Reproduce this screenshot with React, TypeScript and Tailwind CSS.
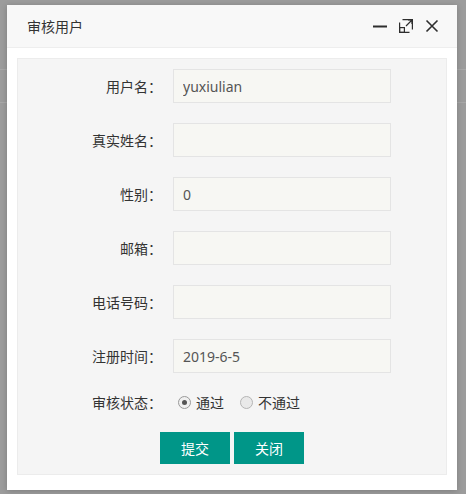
import React, { useState } from 'react';

const font = { fontFamily: '"Noto Sans", "Noto Sans CJK SC", sans-serif' };

const fields = [
  { label: '用户名：', value: 'yuxiulian' },
  { label: '真实姓名：', value: '' },
  { label: '性别：', value: '0' },
  { label: '邮箱：', value: '' },
  { label: '电话号码：', value: '' },
  { label: '注册时间：', value: '2019-6-5' },
];

const Radio = ({ checked, label, onClick }) => (
  <label onClick={onClick} className="flex items-center gap-[5px] cursor-pointer">
    <span className={`w-[13px] h-[13px] rounded-full border flex items-center justify-center ${checked ? 'border-[#9a9a9a] bg-[#f0f0f0]' : 'border-[#b5b5b5] bg-[#e9e9e9]'}`}>
      {checked && <span className="w-[5px] h-[5px] rounded-full bg-[#555]" />}
    </span>
    <span className="text-[14px] text-[#333]">{label}</span>
  </label>
);

export default function App() {
  const [pass, setPass] = useState(true);

  return (
    <div className="relative w-[466px] h-[494px] bg-[#9c9c9c] overflow-hidden" style={font}>
      {/* page behind the shade */}
      <div className="flex flex-col">
        <div className="h-[70px] border-b border-[#a8a8a8]" />
        <div className="h-[33px] border-b border-[#a8a8a8]" />
      </div>

      <div className="absolute left-[7px] top-[5px] w-[450px] h-[485px] bg-white flex flex-col shadow-[0_1px_6px_rgba(0,0,0,0.2)]">
        <div className="h-[43px] bg-[#f8f8f8] border-b border-[#eee] flex items-center pl-[20px] pr-[18px] shrink-0">
          <span className="text-[14px] text-[#333] flex-1">审核用户</span>
          <div className="flex items-center gap-[12px] text-[#2e2e2e]">
            <svg width="14" height="14" viewBox="0 0 14 14"><path d="M0 7.5h14" stroke="currentColor" strokeWidth="2" /></svg>
            <svg width="14" height="14" viewBox="0 0 14 14" fill="none" stroke="currentColor" strokeWidth="1.2">
              <path d="M3.5 0.6H13.4V10.5M0.6 3.5V13.4H10.5" />
              <rect x="0.6" y="8.6" width="4.8" height="4.8" />
              <path d="M7 7L13 1M9 1h4v4" />
            </svg>
            <svg width="14" height="14" viewBox="0 0 14 14"><path d="M1.5 1.5l11 11M12.5 1.5l-11 11" stroke="currentColor" strokeWidth="1.6" /></svg>
          </div>
        </div>

        <div className="flex-1 px-[10px] pt-[10px] pb-[15px] flex">
          <div className="flex-1 bg-[#f5f5f5] border border-[#ececec] pt-[10px] flex flex-col">
            {fields.map((f) => (
              <div key={f.label} className="flex items-center mb-[20px]">
                <div className="w-[144px] text-right text-[14px] text-[#333]">{f.label}</div>
                <input
                  readOnly
                  value={f.value}
                  className="ml-[11px] w-[218px] h-[34px] bg-[#f7f7f3] border border-[#e4e4e4] px-[9px] text-[14px] text-[#555] outline-none"
                />
              </div>
            ))}
            <div className="flex items-center -mt-[1px]">
              <div className="w-[144px] text-right text-[14px] text-[#333]">审核状态：</div>
              <div className="ml-[16px] flex items-center gap-[16px]">
                <Radio checked={pass} label="通过" onClick={() => setPass(true)} />
                <Radio checked={!pass} label="不通过" onClick={() => setPass(false)} />
              </div>
            </div>
            <div className="flex gap-[4px] mt-[19px] pl-[142px]">
              <button className="w-[70px] h-[32px] bg-[#009688] text-white text-[14px]">提交</button>
              <button className="w-[70px] h-[32px] bg-[#009688] text-white text-[14px]">关闭</button>
            </div>
          </div>
        </div>
      </div>
    </div>
  );
}
